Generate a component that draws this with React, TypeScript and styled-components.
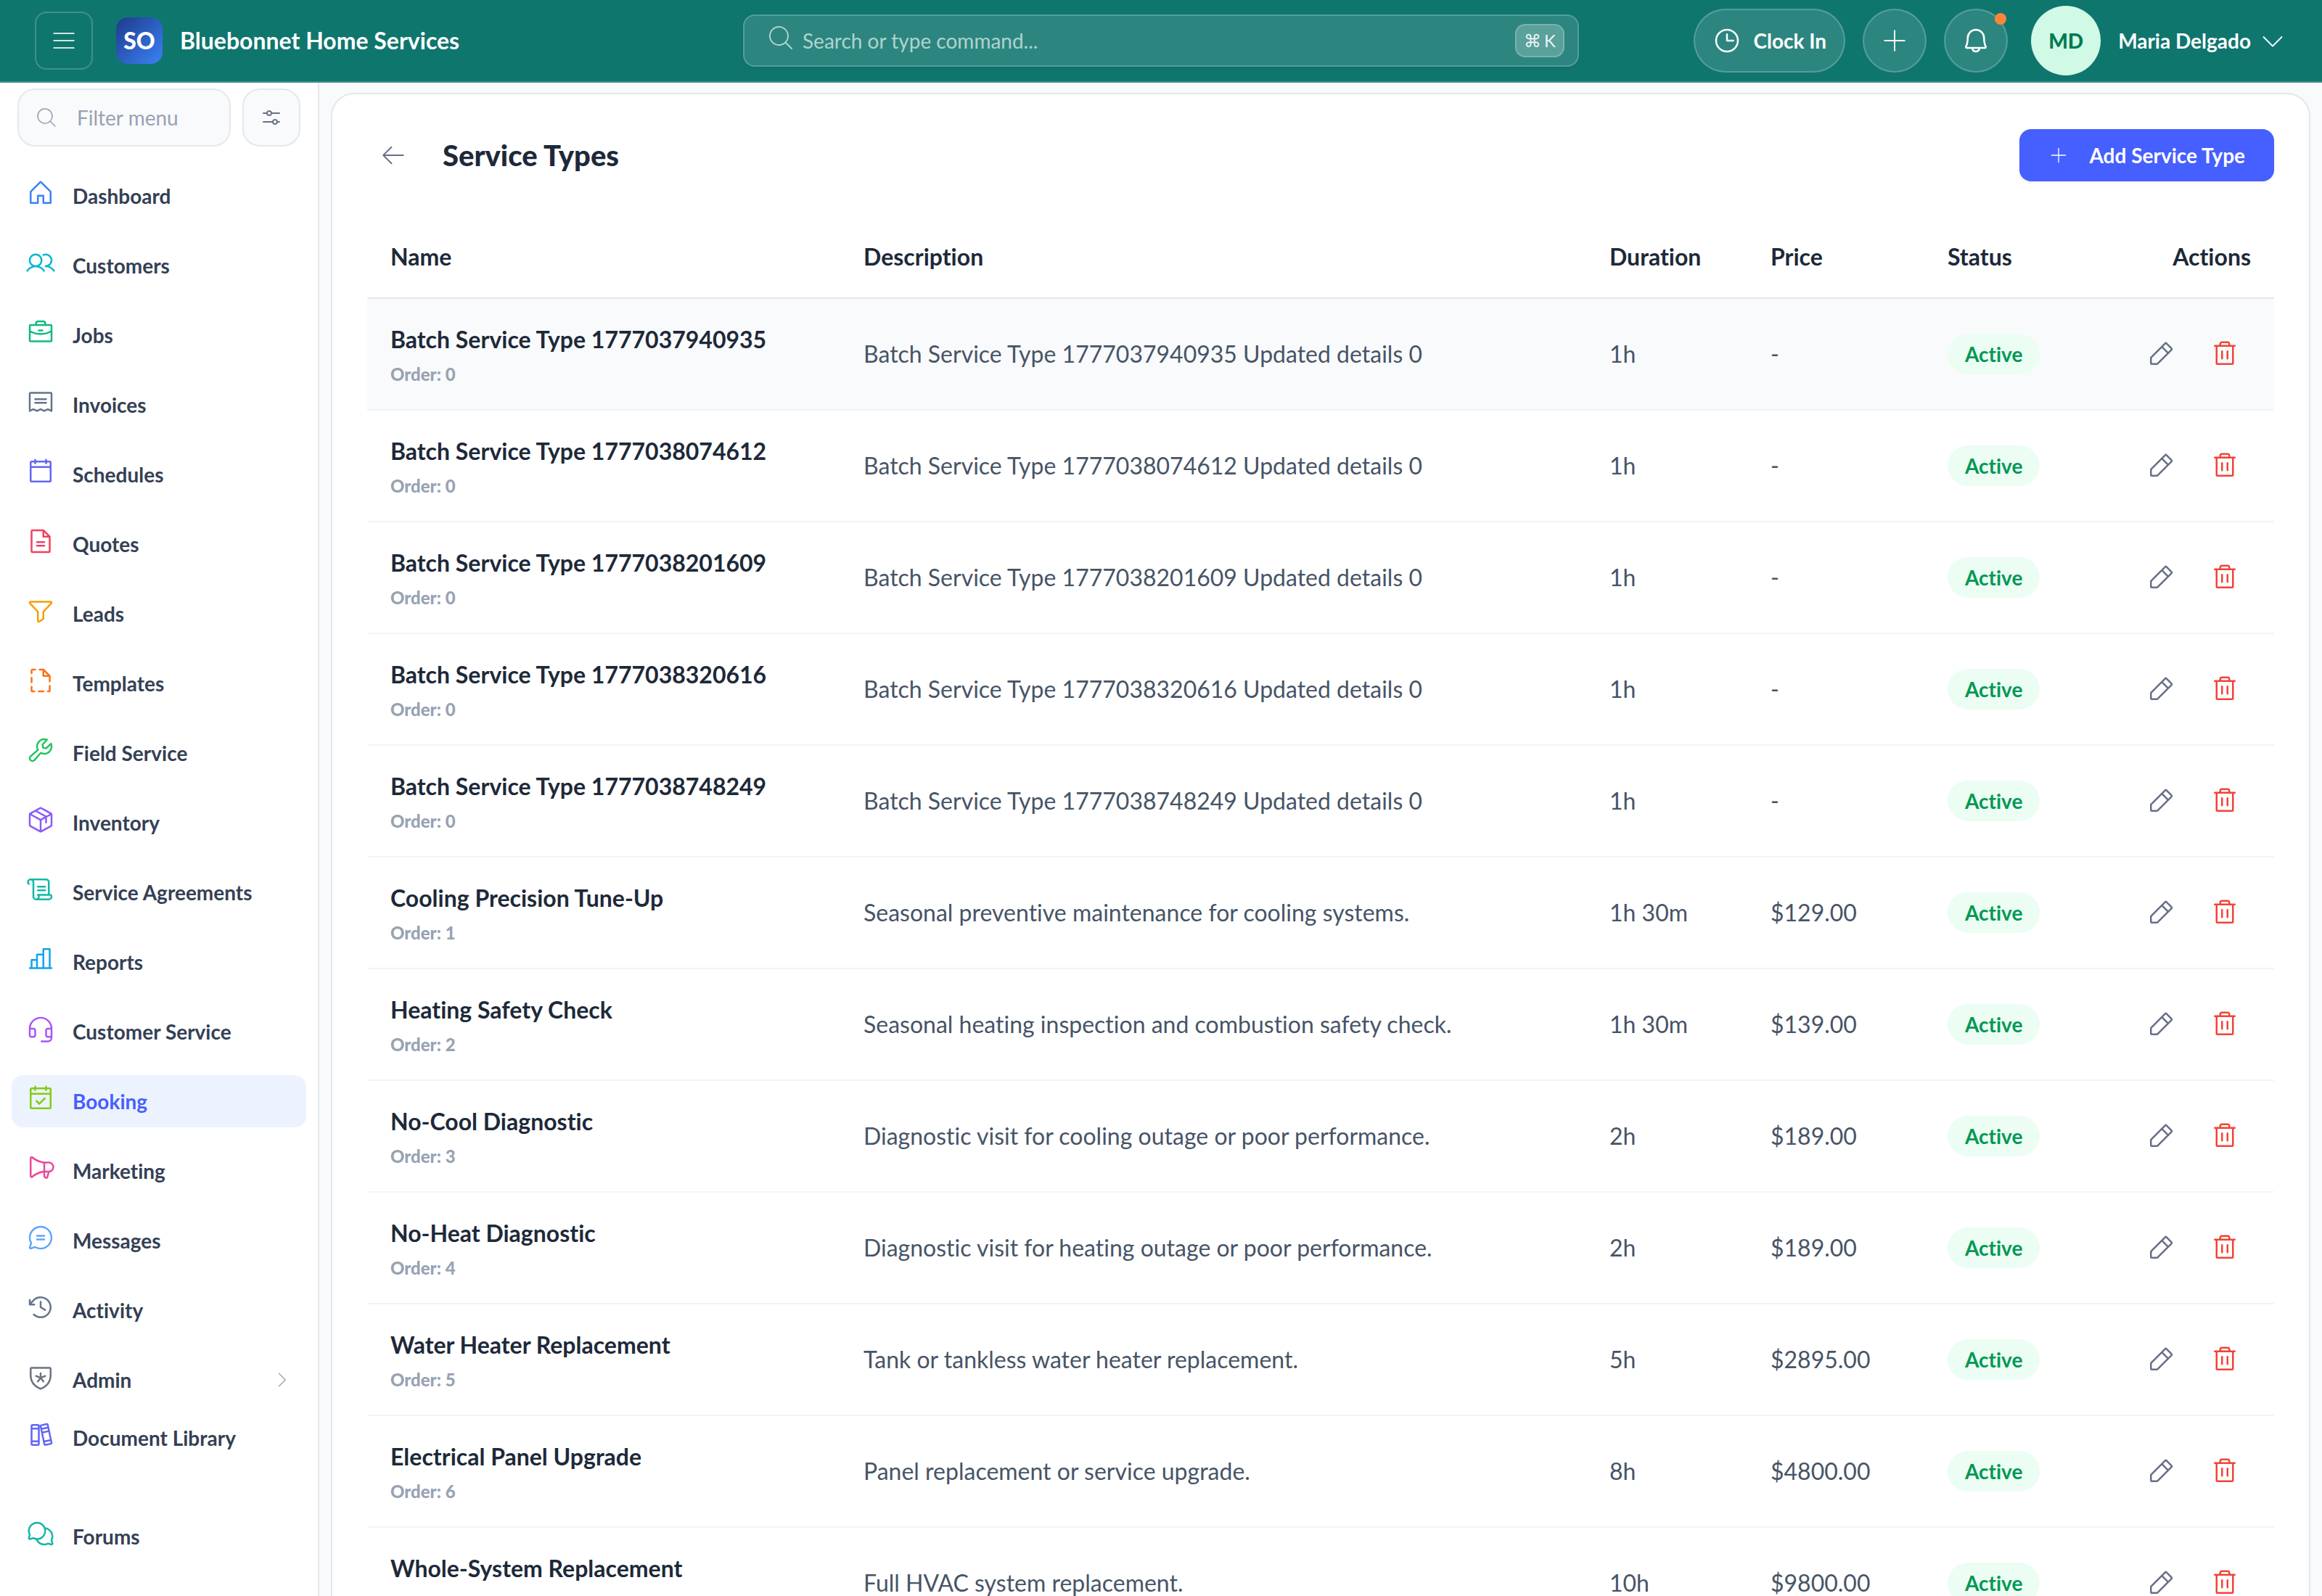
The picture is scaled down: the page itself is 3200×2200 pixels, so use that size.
import React from 'react';
import styled, { createGlobalStyle } from 'styled-components';
import type { IconType } from 'react-icons';
import {
  PiArrowLeftLight,
  PiBell,
  PiBooks,
  PiBriefcase,
  PiCalendarBlank,
  PiCalendarCheck,
  PiCaretDownLight,
  PiCaretRightLight,
  PiChartBar,
  PiChatCircleText,
  PiChatsCircle,
  PiClock,
  PiClockCounterClockwise,
  PiFileDashed,
  PiFileText,
  PiFunnel,
  PiHeadset,
  PiHouse,
  PiListLight,
  PiMagnifyingGlassLight,
  PiMegaphone,
  PiPackage,
  PiPencilSimple,
  PiPlusLight,
  PiReceipt,
  PiScroll,
  PiShieldStar,
  PiSlidersHorizontal,
  PiTrash,
  PiUsers,
  PiWrench,
} from 'react-icons/pi';

const GlobalStyle = createGlobalStyle`
  *, *::before, *::after { box-sizing: border-box; }
  html, body, #root { height: 100%; }
  body {
    margin: 0;
    background: #f9fafb;
    color: #1d2939;
    font-family: Lato, "Noto Sans", sans-serif;
    font-size: 28px;
    line-height: 40px;
    font-variant-ligatures: none;
    overflow: hidden;
  }
  button, input { font: inherit; color: inherit; }
  button { cursor: pointer; }
  svg { display: block; flex-shrink: 0; }
`;

const Page = styled.div`
  display: flex;
  flex-direction: column;
  height: 100%;
`;

const Header = styled.header`
  display: grid;
  grid-template-columns: 1fr minmax(0, 1152px) 1fr;
  align-items: center;
  height: 114px;
  flex-shrink: 0;
  padding: 0 48px;
  background: #0f766e;
  border-bottom: 2px solid #3f918b;
  color: #ffffff;
`;

const Brand = styled.div`
  display: flex;
  align-items: center;
`;

const MenuButton = styled.button`
  display: grid;
  place-items: center;
  width: 80px;
  height: 80px;
  padding: 0;
  border: 2px solid rgba(255, 255, 255, 0.2);
  border-radius: 16px;
  background: transparent;
  color: rgba(255, 255, 255, 0.8);
`;

const Logo = styled.span`
  display: grid;
  place-items: center;
  width: 64px;
  height: 64px;
  margin: 0 24px 0 32px;
  border-radius: 16px;
  background: linear-gradient(135deg, #1e3a8a, #3b82f6);
  font-size: 32px;
  font-weight: 900;
`;

const BrandName = styled.span`
  font-size: 32px;
  font-weight: 700;
  white-space: nowrap;
`;

const SearchBox = styled.label`
  display: flex;
  align-items: center;
  height: 72px;
  padding: 0 18px 0 30px;
  border: 2px solid rgba(255, 255, 255, 0.2);
  border-radius: 16px;
  background: rgba(255, 255, 255, 0.12);
  color: rgba(255, 255, 255, 0.65);
  box-shadow: 0 2px 4px rgba(16, 24, 40, 0.06);

  & > svg { margin-bottom: 8px; }

  input {
    flex: 1;
    min-width: 0;
    padding: 0 10px;
    border: 0;
    outline: 0;
    background: transparent;
  }
  input::placeholder { color: rgba(255, 255, 255, 0.65); opacity: 1; }
`;

const Shortcut = styled.kbd`
  display: flex;
  align-items: center;
  justify-content: center;
  gap: 4px;
  width: 68px;
  height: 46px;
  border: 2px solid rgba(255, 255, 255, 0.2);
  border-radius: 14px;
  background: rgba(255, 255, 255, 0.22);
  color: rgba(255, 255, 255, 0.9);
  font-family: inherit;
  font-size: 24px;
`;

const HeaderActions = styled.div`
  display: flex;
  align-items: center;
  justify-content: flex-end;
  gap: 24px;
`;

const PillButton = styled.button<{ $round?: boolean }>`
  position: relative;
  display: flex;
  align-items: center;
  justify-content: center;
  gap: 16px;
  width: ${(p) => (p.$round ? '88px' : 'auto')};
  height: 88px;
  padding: ${(p) => (p.$round ? '0' : '0 24px')};
  border: 2px solid rgba(255, 255, 255, 0.2);
  border-radius: 44px;
  background: rgba(255, 255, 255, 0.12);
  font-weight: 700;
  white-space: nowrap;
`;

const AlertDot = styled.span`
  position: absolute;
  top: 4px;
  right: 0;
  width: 16px;
  height: 16px;
  border-radius: 50%;
  background: #fd853a;
`;

const UserButton = styled.button`
  display: flex;
  align-items: center;
  gap: 10px;
  margin-left: 8px;
  padding: 0;
  border: 0;
  background: transparent;
  font-weight: 700;
  white-space: nowrap;
`;

const Avatar = styled.span`
  display: grid;
  place-items: center;
  width: 96px;
  height: 96px;
  margin-right: 14px;
  border-radius: 50%;
  background: #d0fae5;
  color: #007a55;
  font-weight: 900;
`;

const Body = styled.div`
  display: flex;
  flex: 1;
  min-height: 0;
`;

const Sidebar = styled.aside`
  display: flex;
  flex-direction: column;
  width: 440px;
  flex-shrink: 0;
  border-right: 2px solid #e4e7ec;
  background: #ffffff;
  overflow: hidden;
`;

const FilterBar = styled.div`
  display: flex;
  gap: 16px;
  padding: 8px 24px 32px;
`;

const FilterField = styled.label`
  display: flex;
  align-items: center;
  gap: 26px;
  flex: 1;
  min-width: 0;
  height: 80px;
  padding: 0 22px;
  border: 2px solid #e4e7ec;
  border-radius: 24px;
  background: #f9fafb;
  color: #98a2b3;

  input {
    width: 100%;
    min-width: 0;
    padding: 0;
    border: 0;
    outline: 0;
    background: transparent;
  }
  input::placeholder { color: #98a2b3; opacity: 1; }
`;

const FilterButton = styled.button`
  display: grid;
  place-items: center;
  width: 80px;
  height: 80px;
  padding: 0;
  border: 2px solid #e4e7ec;
  border-radius: 24px;
  background: #f9fafb;
  color: #667085;
`;

const NavList = styled.ul<{ $gap: number }>`
  display: flex;
  flex-direction: column;
  gap: ${(p) => p.$gap}px;
  margin: 0 0 8px;
  padding: 0 16px;
  list-style: none;
`;

const NavLink = styled.a<{ $active?: boolean }>`
  display: flex;
  align-items: center;
  gap: 24px;
  height: 72px;
  padding: 0 20px;
  border-radius: 16px;
  background: ${(p) => (p.$active ? '#ecf3ff' : 'transparent')};
  color: ${(p) => (p.$active ? '#465fff' : '#344054')};
  font-weight: 700;
  text-decoration: none;
  white-space: nowrap;
`;

const NavIcon = styled.span<{ $color: string }>`
  padding-bottom: 8px;
  color: ${(p) => p.$color};
`;

const NavLabel = styled.span`
  flex: 1;
`;

const NavCaret = styled.span`
  color: #98a2b3;
`;

const Main = styled.main`
  flex: 1;
  min-width: 0;
  padding: 14px 16px 0;
`;

const Card = styled.section`
  min-height: 100%;
  padding: 48px;
  border: 2px solid #e4e7ec;
  border-radius: 32px;
  background: #ffffff;
`;

const TitleRow = styled.div`
  display: flex;
  align-items: center;
  margin-bottom: 48px;
`;

const BackButton = styled.button`
  padding: 16px;
  margin-right: 32px;
  border: 0;
  background: transparent;
  color: #667085;
`;

const Title = styled.h1`
  flex: 1;
  margin: 0;
  font-size: 40px;
  line-height: 56px;
  font-weight: 900;
`;

const AddButton = styled.button`
  display: flex;
  align-items: center;
  gap: 28px;
  height: 72px;
  padding: 0 40px;
  border: 0;
  border-radius: 16px;
  background: #465fff;
  box-shadow: 0 2px 4px rgba(16, 24, 40, 0.06);
  color: #ffffff;
  font-weight: 700;
  white-space: nowrap;
`;

const Table = styled.table`
  width: 100%;
  border-collapse: separate;
  border-spacing: 0;
  table-layout: fixed;
  font-size: 32px;
  line-height: 48px;
`;

const Col = styled.col<{ $width?: number }>`
  width: ${(p) => (p.$width ? `${p.$width}px` : 'auto')};
`;

const Th = styled.th<{ $end?: boolean }>`
  padding: 32px;
  border-bottom: 2px solid #e4e7ec;
  font-weight: 700;
  text-align: ${(p) => (p.$end ? 'right' : 'left')};
`;

const Row = styled.tr<{ $hovered?: boolean }>`
  background: ${(p) => (p.$hovered ? '#f9fafb' : 'transparent')};
`;

const Td = styled.td`
  padding: 0 32px;
  border-bottom: 2px solid #f2f4f7;
  color: #475467;
  white-space: nowrap;
`;

const NameCell = styled(Td)`
  padding: 32px;
  color: #1d2939;
  font-weight: 700;
`;

const Order = styled.div`
  margin-top: 8px;
  color: #98a2b3;
  font-size: 24px;
  line-height: 32px;
  font-weight: 900;
`;

const Badge = styled.span`
  display: flex;
  align-items: center;
  width: max-content;
  height: 56px;
  padding: 0 24px;
  border-radius: 28px;
  background: #ecfdf3;
  color: #039855;
  font-size: 28px;
  font-weight: 700;
`;

const RowActions = styled.div`
  display: flex;
  justify-content: flex-end;
  gap: 16px;
`;

const IconButton = styled.button<{ $danger?: boolean }>`
  padding: 16px;
  border: 0;
  background: transparent;
  color: ${(p) => (p.$danger ? '#f04438' : '#667085')};
`;

interface NavItem {
  label: string;
  icon: IconType;
  color: string;
  expandable?: boolean;
}

const mainNav: NavItem[] = [
  { label: 'Dashboard', icon: PiHouse, color: '#3b82f6' },
  { label: 'Customers', icon: PiUsers, color: '#06b6d4' },
  { label: 'Jobs', icon: PiBriefcase, color: '#10b981' },
  { label: 'Invoices', icon: PiReceipt, color: '#64748b' },
  { label: 'Schedules', icon: PiCalendarBlank, color: '#6366f1' },
  { label: 'Quotes', icon: PiFileText, color: '#f43f5e' },
  { label: 'Leads', icon: PiFunnel, color: '#f59e0b' },
  { label: 'Templates', icon: PiFileDashed, color: '#f97316' },
  { label: 'Field Service', icon: PiWrench, color: '#22c55e' },
  { label: 'Inventory', icon: PiPackage, color: '#8b5cf6' },
  { label: 'Service Agreements', icon: PiScroll, color: '#14b8a6' },
  { label: 'Reports', icon: PiChartBar, color: '#0ea5e9' },
  { label: 'Customer Service', icon: PiHeadset, color: '#a855f7' },
  { label: 'Booking', icon: PiCalendarCheck, color: '#84cc16' },
  { label: 'Marketing', icon: PiMegaphone, color: '#ec4899' },
  { label: 'Messages', icon: PiChatCircleText, color: '#60a5fa' },
  { label: 'Activity', icon: PiClockCounterClockwise, color: '#64748b' },
  { label: 'Admin', icon: PiShieldStar, color: '#6b7280', expandable: true },
];

const extraNav: NavItem[] = [
  { label: 'Document Library', icon: PiBooks, color: '#6366f1' },
  { label: 'Forums', icon: PiChatsCircle, color: '#14b8a6' },
];

interface Service {
  name: string;
  order: number;
  description: string;
  duration: string;
  price: string;
}

const batch = (id: string): Service => ({
  name: `Batch Service Type ${id}`,
  order: 0,
  description: `Batch Service Type ${id} Updated details 0`,
  duration: '1h',
  price: '-',
});

const services: Service[] = [
  batch('1777037940935'),
  batch('1777038074612'),
  batch('1777038201609'),
  batch('1777038320616'),
  batch('1777038748249'),
  { name: 'Cooling Precision Tune-Up', order: 1, description: 'Seasonal preventive maintenance for cooling systems.', duration: '1h 30m', price: '$129.00' },
  { name: 'Heating Safety Check', order: 2, description: 'Seasonal heating inspection and combustion safety check.', duration: '1h 30m', price: '$139.00' },
  { name: 'No-Cool Diagnostic', order: 3, description: 'Diagnostic visit for cooling outage or poor performance.', duration: '2h', price: '$189.00' },
  { name: 'No-Heat Diagnostic', order: 4, description: 'Diagnostic visit for heating outage or poor performance.', duration: '2h', price: '$189.00' },
  { name: 'Water Heater Replacement', order: 5, description: 'Tank or tankless water heater replacement.', duration: '5h', price: '$2895.00' },
  { name: 'Electrical Panel Upgrade', order: 6, description: 'Panel replacement or service upgrade.', duration: '8h', price: '$4800.00' },
  { name: 'Whole-System Replacement', order: 7, description: 'Full HVAC system replacement.', duration: '10h', price: '$9800.00' },
];

function Nav({ items, gap, current }: { items: NavItem[]; gap: number; current?: string }) {
  return (
    <NavList $gap={gap}>
      {items.map(({ label, icon: Icon, color, expandable }) => (
        <li key={label}>
          <NavLink href="#" $active={label === current} aria-current={label === current ? 'page' : undefined}>
            <NavIcon $color={color}><Icon size={40} /></NavIcon>
            <NavLabel>{label}</NavLabel>
            {expandable && <NavCaret><PiCaretRightLight size={28} /></NavCaret>}
          </NavLink>
        </li>
      ))}
    </NavList>
  );
}

function ServiceRow({ service, hovered }: { service: Service; hovered: boolean }) {
  return (
    <Row $hovered={hovered}>
      <NameCell>
        {service.name}
        <Order>Order: {service.order}</Order>
      </NameCell>
      <Td>{service.description}</Td>
      <Td>{service.duration}</Td>
      <Td>{service.price}</Td>
      <Td><Badge>Active</Badge></Td>
      <Td>
        <RowActions>
          <IconButton aria-label={`Edit ${service.name}`}><PiPencilSimple size={40} /></IconButton>
          <IconButton $danger aria-label={`Delete ${service.name}`}><PiTrash size={40} /></IconButton>
        </RowActions>
      </Td>
    </Row>
  );
}

export default function App() {
  return (
    <Page>
      <GlobalStyle />
      <Header>
        <Brand>
          <MenuButton aria-label="Toggle menu"><PiListLight size={40} /></MenuButton>
          <Logo>SO</Logo>
          <BrandName>Bluebonnet Home Services</BrandName>
        </Brand>
        <SearchBox>
          <PiMagnifyingGlassLight size={40} />
          <input type="text" aria-label="Search" placeholder="Search or type command..." />
          <Shortcut><span>⌘</span><span>K</span></Shortcut>
        </SearchBox>
        <HeaderActions>
          <PillButton><PiClock size={40} />Clock In</PillButton>
          <PillButton $round aria-label="Create"><PiPlusLight size={40} /></PillButton>
          <PillButton $round aria-label="Notifications"><PiBell size={40} /><AlertDot /></PillButton>
          <UserButton>
            <Avatar>MD</Avatar>
            Maria Delgado
            <PiCaretDownLight size={40} />
          </UserButton>
        </HeaderActions>
      </Header>
      <Body>
        <Sidebar>
          <FilterBar>
            <FilterField>
              <PiMagnifyingGlassLight size={32} />
              <input type="text" aria-label="Filter menu" placeholder="Filter menu" />
            </FilterField>
            <FilterButton aria-label="Menu options"><PiSlidersHorizontal size={32} /></FilterButton>
          </FilterBar>
          <nav>
            <Nav items={mainNav} gap={24} current="Booking" />
            <Nav items={extraNav} gap={64} />
          </nav>
        </Sidebar>
        <Main>
          <Card>
            <TitleRow>
              <BackButton aria-label="Back"><PiArrowLeftLight size={40} /></BackButton>
              <Title>Service Types</Title>
              <AddButton><PiPlusLight size={28} />Add Service Type</AddButton>
            </TitleRow>
            <Table>
              <colgroup>
                <Col $width={652} />
                <Col />
                <Col $width={222} />
                <Col $width={244} />
                <Col $width={222} />
                <Col $width={260} />
              </colgroup>
              <thead>
                <tr>
                  <Th>Name</Th>
                  <Th>Description</Th>
                  <Th>Duration</Th>
                  <Th>Price</Th>
                  <Th>Status</Th>
                  <Th $end>Actions</Th>
                </tr>
              </thead>
              <tbody>
                {services.map((service, index) => (
                  <ServiceRow key={service.name} service={service} hovered={index === 0} />
                ))}
              </tbody>
            </Table>
          </Card>
        </Main>
      </Body>
    </Page>
  );
}
